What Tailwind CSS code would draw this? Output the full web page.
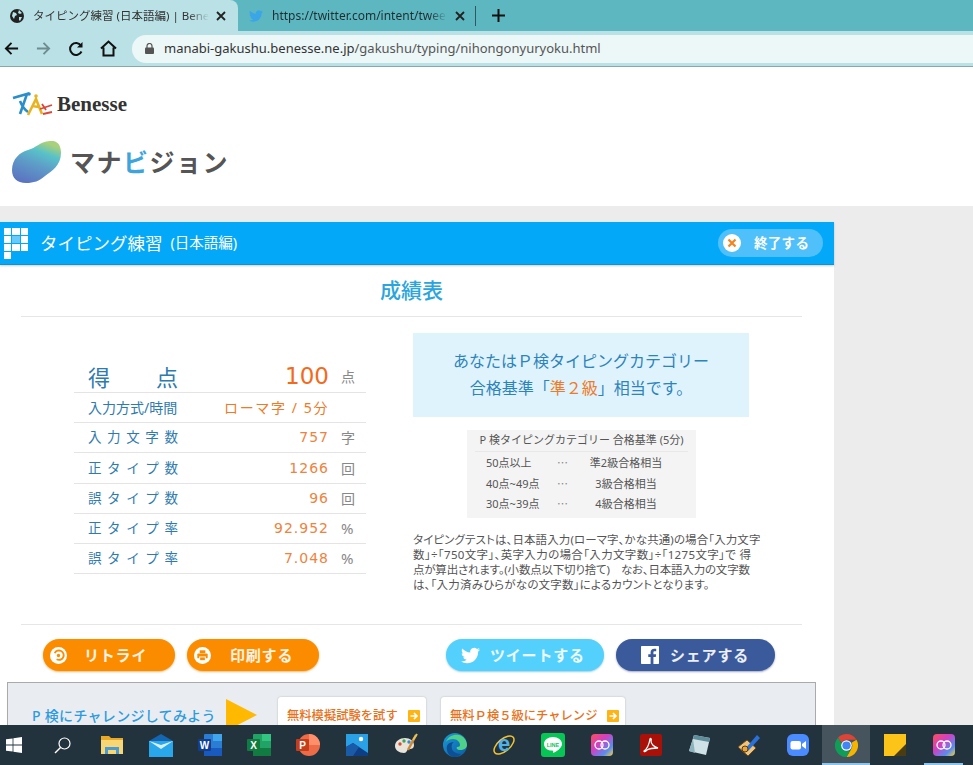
<!DOCTYPE html>
<html lang="ja">
<head>
  <meta charset="UTF-8">
  <title>タイピング練習 (日本語編) | Benesse</title>
  <script src="https://cdn.jsdelivr.net/npm/@tailwindcss/browser@4"></script>
</head>
<body class="h-[765px] w-[973px] overflow-hidden bg-[#ececec] font-['Noto_Sans','Noto_Sans_CJK_JP',sans-serif] text-[#444]">

  <!-- browser chrome -->
  <div class="flex h-[31px] items-end bg-[#5db7c0]">
    <div class="flex h-[31px] w-[238px] items-center rounded-tr-lg bg-[#b9e1e6] pl-[10px] text-[11.5px] text-[#333]">
      <svg class="mr-[9px] h-[14px] w-[14px] shrink-0" viewBox="0 0 14 14"><circle cx="7" cy="7" r="7" fill="#222"/><path d="M3 3l3 1 1 2-2 1-1 3-2-3zM9 1l3 3-2 1-2-1zM9 8l3 0-2 4-1-1z" fill="#b9e1e6"/></svg>
      <span class="w-[176px] overflow-hidden whitespace-nowrap [mask-image:linear-gradient(to_right,black_88%,transparent)]">タイピング練習 (日本語編) | Benesse</span>
      <svg class="ml-[7px] h-[10px] w-[10px]" viewBox="0 0 10 10"><path d="M1 1l8 8M9 1l-8 8" stroke="#222" stroke-width="1.8"/></svg>
    </div>
    <div class="flex h-[31px] items-center text-[12px] text-[#1e2e30]">
      <svg class="ml-[11px] mr-[9px] h-[14px] w-[14px]" viewBox="0 0 24 24"><path fill="#3aa6e8" d="M23.953 4.57a10 10 0 01-2.825.775 4.958 4.958 0 002.163-2.723c-.951.555-2.005.959-3.127 1.184a4.92 4.92 0 00-8.384 4.482C7.69 8.095 4.067 6.13 1.64 3.162a4.822 4.822 0 00-.666 2.475c0 1.71.87 3.213 2.188 4.096a4.904 4.904 0 01-2.228-.616v.06a4.923 4.923 0 003.946 4.827 4.996 4.996 0 01-2.212.085 4.936 4.936 0 004.604 3.417 9.867 9.867 0 01-6.102 2.105c-.39 0-.779-.023-1.17-.067a13.995 13.995 0 007.557 2.209c9.053 0 13.998-7.496 13.998-13.985 0-.21 0-.42-.015-.63A9.935 9.935 0 0024 4.59z"/></svg>
      <span class="w-[175px] overflow-hidden whitespace-nowrap [mask-image:linear-gradient(to_right,black_90%,transparent)]">https://twitter.com/intent/tweet?text=</span>
      <svg class="ml-[8px] h-[10px] w-[10px]" viewBox="0 0 10 10"><path d="M1 1l8 8M9 1l-8 8" stroke="#222" stroke-width="1.8"/></svg>
      <div class="ml-[10px] h-[20px] w-px bg-[#2c5a60]"></div>
      <svg class="ml-[16px] h-[13px] w-[13px]" viewBox="0 0 13 13"><path d="M6.5 0v13M0 6.5h13" stroke="#111" stroke-width="2"/></svg>
    </div>
  </div>
  <div class="flex h-[36px] items-center border-b border-[#86a9ad] bg-[#b9e1e6]">
    <svg class="ml-[4px] h-[15px] w-[15px]" viewBox="0 0 16 16"><path d="M15 8H2M8 2L2 8l6 6" fill="none" stroke="#111" stroke-width="2"/></svg>
    <svg class="ml-[17px] h-[15px] w-[15px]" viewBox="0 0 16 16"><path d="M1 8h13M8 2l6 6-6 6" fill="none" stroke="#6f8c90" stroke-width="2"/></svg>
    <svg class="ml-[17px] h-[16px] w-[16px]" viewBox="0 0 16 16"><path d="M13.5 10.5A6 6 0 1 1 13 4.5" fill="none" stroke="#111" stroke-width="2"/><path d="M14.5 1v5.5H9z" fill="#111"/></svg>
    <svg class="ml-[16px] h-[17px] w-[17px]" viewBox="0 0 17 17"><path d="M1 8.5L8.5 1.5l7.5 7M3.5 7.5v8h10v-8" fill="none" stroke="#111" stroke-width="2"/></svg>
    <div class="ml-[15px] flex h-[28px] flex-1 items-center rounded-l-full bg-[#ecf7f8] pl-[13px] text-[13px] text-[#333]">
      <svg class="mr-[10px] h-[11px] w-[9px]" viewBox="0 0 9 11"><path d="M2 5V3a2.5 2.5 0 0 1 5 0v2" fill="none" stroke="#555" stroke-width="1.2"/><rect y="4.5" width="9" height="6.5" rx="1" fill="#555"/></svg>
      <span>manabi-gakushu.benesse.ne.jp<span class="text-[#555]">/gakushu/typing/nihongonyuryoku.html</span></span>
    </div>
  </div>

  <div class="h-[658px] overflow-hidden">
    <!-- site header -->
    <div class="h-[139px] bg-white pl-[12px] pt-[25px]">
      <div class="flex items-center">
        <svg class="h-[25px] w-[42px]" viewBox="0 0 42 25">
          <path d="M1 6L15 2 8 22M8 9c2 5 5 9 8 11" fill="none" stroke="#2a8fc9" stroke-width="2.6"/>
          <circle cx="17" cy="2" r="1.800" fill="#2a8fc9"/>
          <path d="M16 23l8-16 6 15M20 14l7 1" fill="none" stroke="#e8b321" stroke-width="2.6"/>
          <circle cx="24" cy="4" r="1.800" fill="#e8b321"/>
          <path d="M28 17L40 13M30 12l4 6M31 22l9-2" fill="none" stroke="#d9483b" stroke-width="1.800"/>
        </svg>
        <span class="ml-[3px] font-['Liberation_Serif',serif] text-[21px] leading-none font-bold text-[#333]">Benesse</span>
      </div>
      <div class="mt-[24px] flex items-center">
        <svg class="h-[43px] w-[50px]" viewBox="0 0 50 43">
          <defs><linearGradient id="blob" x1="0.15" y1="1" x2="0.6" y2="0"><stop offset="0" stop-color="#5b6fc0"/><stop offset="0.5" stop-color="#5e9dc8"/><stop offset="0.78" stop-color="#58c2c8"/><stop offset="1" stop-color="#a9d07a"/></linearGradient></defs>
          <path d="M0 29C0 18 8 11 16 9 24 7 27 1 38 0 46-1 49 5 49 12 49 24 40 30 33 35 27 40 22 42 14 42 5 42 0 37 0 29z" fill="url(#blob)"/>
        </svg>
        <span class="ml-[8px] text-[25px] leading-none font-bold tracking-[1.5px] text-[#555]">マナ<span class="text-[#3ea5dc]">ビ</span>ジョン</span>
      </div>
    </div>

    <div class="mt-[16px] w-[834px] bg-white">
      <!-- blue title bar -->
      <div class="flex h-[43px] items-center border-b border-[#0a94d6] bg-[#03a9f8] pl-[4px] text-white shadow-[0_1px_2px_rgba(0,0,0,0.2)]">
        <div class="grid w-[24px] grid-cols-3 gap-px">
          <div class="h-[7px] bg-white"></div><div class="h-[7px] bg-white"></div><div class="h-[7px] bg-white"></div>
          <div class="h-[7px] bg-white"></div><div class="h-[7px] bg-white/40"></div><div class="h-[7px] bg-white"></div>
          <div class="h-[7px] bg-white"></div><div class="h-[7px] bg-white"></div><div class="h-[7px] bg-white"></div>
          <div class="h-[7px] bg-white"></div>
        </div>
        <span class="ml-[12px] text-[17.5px]">タイピング練習</span>
        <span class="ml-[8px] text-[14.5px]">(日本語編)</span>
        <div class="mr-[11px] ml-auto flex h-[28px] w-[105px] items-center rounded-full bg-[#4fc0f9] pl-[5px]">
          <svg class="h-[18px] w-[18px]" viewBox="0 0 18 18"><circle cx="9" cy="9" r="9" fill="#fff"/><path d="M5.5 5.5l7 7M12.5 5.5l-7 7" stroke="#f5841f" stroke-width="2.2"/></svg>
          <span class="ml-[13px] text-[13.5px] font-bold tracking-[0.3px]">終了する</span>
        </div>
      </div>

      <div class="ml-[21px] flex h-[52px] w-[781px] items-center justify-center border-b border-[#e6e6e6] pt-[1px] text-[21px] font-medium text-[#2ba5dc]">成績表</div>

      <div class="flex h-[307px]">
        <!-- score table -->
        <div class="ml-[74px] w-[292px] pt-[44px] text-[#2f7bae]">
          <div class="flex h-[32px] items-center border-b border-[#e4e4e4]">
            <span class="ml-[14px] w-[90px] text-[22px] leading-none [text-align-last:justify]">得点</span>
            <span class="w-[151px] text-right font-['DejaVu_Sans',sans-serif] text-[23px] leading-none text-[#f26a1b]">100</span>
            <span class="ml-[12px] text-[14px] text-[#888]">点</span>
          </div>
          <div class="flex h-[30px] items-center border-b border-[#e4e4e4]">
            <span class="ml-[14px] w-[90px] text-[14px] leading-none whitespace-nowrap">入力方式/時間</span>
            <span class="w-[151px] text-right text-[14px] tracking-[1.6px] whitespace-nowrap text-[#ee7a28]">ローマ字 / 5分</span>
          </div>
          <div class="flex h-[30px] items-center border-b border-[#e4e4e4]">
            <span class="ml-[14px] w-[90px] text-[13.5px] [text-align-last:justify]">入力文字数</span>
            <span class="w-[151px] text-right font-['DejaVu_Sans',sans-serif] text-[14px] tracking-[1px] text-[#ee8340]">757</span>
            <span class="ml-[12px] text-[14px] text-[#888]">字</span>
          </div>
          <div class="flex h-[31px] items-center border-b border-[#e4e4e4]">
            <span class="ml-[14px] w-[90px] text-[13.5px] [text-align-last:justify]">正タイプ数</span>
            <span class="w-[151px] text-right font-['DejaVu_Sans',sans-serif] text-[14px] tracking-[1px] text-[#ee8340]">1266</span>
            <span class="ml-[12px] text-[14px] text-[#888]">回</span>
          </div>
          <div class="flex h-[30px] items-center border-b border-[#e4e4e4]">
            <span class="ml-[14px] w-[90px] text-[13.5px] [text-align-last:justify]">誤タイプ数</span>
            <span class="w-[151px] text-right font-['DejaVu_Sans',sans-serif] text-[14px] tracking-[1px] text-[#ee8340]">96</span>
            <span class="ml-[12px] text-[14px] text-[#888]">回</span>
          </div>
          <div class="flex h-[30px] items-center border-b border-[#e4e4e4]">
            <span class="ml-[14px] w-[90px] text-[13.5px] [text-align-last:justify]">正タイプ率</span>
            <span class="w-[151px] text-right font-['DejaVu_Sans',sans-serif] text-[14px] tracking-[1px] text-[#ee8340]">92.952</span>
            <span class="ml-[12px] text-[15px] text-[#888]">%</span>
          </div>
          <div class="flex h-[30px] items-center border-b border-[#e4e4e4]">
            <span class="ml-[14px] w-[90px] text-[13.5px] [text-align-last:justify]">誤タイプ率</span>
            <span class="w-[151px] text-right font-['DejaVu_Sans',sans-serif] text-[14px] tracking-[1px] text-[#ee8340]">7.048</span>
            <span class="ml-[12px] text-[15px] text-[#888]">%</span>
          </div>
        </div>

        <!-- result side -->
        <div class="ml-[47px] w-[356px] pt-[16px]">
          <div class="flex h-[84px] w-[336px] flex-col items-center justify-center bg-[#dff3fd] text-[16px] leading-[27px] text-[#2d83ba]">
            <p>あなたはＰ検タイピングカテゴリー</p>
            <p>合格基準「<span class="text-[#ee7a28]">準２級</span>」相当です。</p>
          </div>
          <div class="mt-[13px] ml-[54px] h-[88px] w-[229px] bg-[#f4f4f4] text-[11px] text-[#555]">
            <div class="mx-[8px] flex h-[22px] items-center justify-center border-b border-[#e8e8e8] whitespace-nowrap">P 検タイピングカテゴリー 合格基準 (5分)</div>
            <div class="flex h-[22px] items-center pl-[19px]"><span class="w-[71px]">50点以上</span><span class="w-[30px] text-[#888]">⋯</span><span class="w-[78px] text-center">準2級合格相当</span></div>
            <div class="flex h-[20px] items-center pl-[19px]"><span class="w-[71px]">40点~49点</span><span class="w-[30px] text-[#888]">⋯</span><span class="w-[78px] text-center">3級合格相当</span></div>
            <div class="flex h-[20px] items-center pl-[19px]"><span class="w-[71px]">30点~39点</span><span class="w-[30px] text-[#888]">⋯</span><span class="w-[78px] text-center">4級合格相当</span></div>
          </div>
          <div class="mt-[14px] text-[11.5px] leading-[15px] whitespace-nowrap text-[#555] [font-feature-settings:'palt']">
            <p class="tracking-[0.1px]">タイピングテストは、日本語入力(ローマ字、かな共通)の場合「入力文字</p>
            <p class="tracking-[0.35px]">数」÷「750文字」、英字入力の場合「入力文字数」÷「1275文字」で 得</p>
            <p class="tracking-[-0.2px]">点が算出されます。(小数点以下切り捨て)　なお、日本語入力の文字数</p>
            <p class="tracking-[0.2px]">は、「入力済みひらがなの文字数」によるカウントとなります。</p>
          </div>
        </div>
      </div>

      <div class="ml-[21px] w-[781px] border-t border-[#e6e6e6] pt-[14px]">
        <!-- buttons -->
        <div class="flex h-[32px] items-center pl-[22px] text-[15px] font-bold tracking-[0.8px] text-white/90">
          <div class="flex h-[32px] w-[132px] shrink-0 items-center rounded-full bg-[#fb8c00] pl-[7px] shadow-[0_1px_2px_rgba(200,120,0,0.5)]">
            <svg class="h-[17px] w-[17px]" viewBox="0 0 18 18"><circle cx="9" cy="9" r="9" fill="#fff"/><path d="M5 6.5A5 5 0 1 1 7 13" fill="none" stroke="#fb8c00" stroke-width="2"/><circle cx="9" cy="9" r="1.8" fill="#fb8c00"/></svg>
            <span class="ml-[17px]">リトライ</span>
          </div>
          <div class="ml-[12px] flex h-[32px] w-[132px] shrink-0 items-center rounded-full bg-[#fb8c00] pl-[7px] shadow-[0_1px_2px_rgba(200,120,0,0.5)]">
            <svg class="h-[17px] w-[17px]" viewBox="0 0 18 18"><circle cx="9" cy="9" r="9" fill="#fff"/><rect x="6" y="3.5" width="6" height="3" fill="#fb8c00"/><rect x="3.5" y="7" width="11" height="5" rx="1" fill="#fb8c00"/><rect x="6" y="10.5" width="6" height="4" fill="#fb8c00" stroke="#fff"/></svg>
            <span class="ml-[19px]">印刷する</span>
          </div>
          <div class="ml-[127px] flex h-[32px] w-[158px] shrink-0 items-center rounded-full bg-[#54d0fc] pl-[15px] shadow-[0_1px_2px_rgba(0,130,180,0.4)]">
            <svg class="h-[19px] w-[19px]" viewBox="0 0 24 24"><path fill="#fff" d="M23.953 4.57a10 10 0 01-2.825.775 4.958 4.958 0 002.163-2.723c-.951.555-2.005.959-3.127 1.184a4.92 4.92 0 00-8.384 4.482C7.69 8.095 4.067 6.13 1.64 3.162a4.822 4.822 0 00-.666 2.475c0 1.71.87 3.213 2.188 4.096a4.904 4.904 0 01-2.228-.616v.06a4.923 4.923 0 003.946 4.827 4.996 4.996 0 01-2.212.085 4.936 4.936 0 004.604 3.417 9.867 9.867 0 01-6.102 2.105c-.39 0-.779-.023-1.17-.067a13.995 13.995 0 007.557 2.209c9.053 0 13.998-7.496 13.998-13.985 0-.21 0-.42-.015-.63A9.935 9.935 0 0024 4.59z"/></svg>
            <span class="ml-[10px]">ツイートする</span>
          </div>
          <div class="ml-[12px] flex h-[32px] w-[159px] shrink-0 items-center rounded-full bg-[#3a5a9b] pl-[25px] shadow-[0_1px_2px_rgba(20,40,100,0.4)]">
            <svg class="h-[18px] w-[18px]" viewBox="0 0 24 24"><path fill="#fff" d="M22.675 0H1.325C.593 0 0 .593 0 1.325v21.351C0 23.407.593 24 1.325 24H12.82v-9.294H9.692v-3.622h3.128V8.413c0-3.1 1.893-4.788 4.659-4.788 1.325 0 2.463.099 2.795.143v3.24l-1.918.001c-1.504 0-1.795.715-1.795 1.763v2.313h3.587l-.467 3.622h-3.12V24h6.116c.73 0 1.323-.593 1.323-1.325V1.325C24 .593 23.407 0 22.675 0z"/></svg>
            <span class="ml-[11px]">シェアする</span>
          </div>
        </div>
      </div>

      <!-- challenge panel -->
      <div class="mt-[11px] ml-[7px] flex h-[70px] w-[809px] border border-[#aaa] bg-[#e9edf1] pt-[14px] pl-[24px]">
        <span class="mt-[9px] w-[194px] text-[14px] leading-[20px] font-medium tracking-[0.3px] whitespace-nowrap text-[#2d9be0]">P 検にチャレンジしてみよう</span>
        <svg class="mt-[2px] h-[32px] w-[31px]" viewBox="0 0 31 32"><path d="M0 0l31 16L0 32z" fill="#ffb900"/></svg>
        <div class="ml-[21px] flex h-[40px] w-[148px] items-center rounded-[3px] bg-white pb-[2px] pl-[9px] text-[12.3px] font-medium text-[#e8711a] shadow-[0_0_2px_rgba(0,0,0,0.25)]">
          <span class="whitespace-nowrap">無料模擬試験を試す</span>
          <svg class="ml-[10px] h-[12px] w-[12px]" viewBox="0 0 12 12"><rect width="12" height="12" rx="1" fill="#fdb414"/><path d="M2.5 6h6M6 3l3 3-3 3" fill="none" stroke="#fff" stroke-width="1.6"/></svg>
        </div>
        <div class="ml-[15px] flex h-[40px] w-[184px] items-center rounded-[3px] bg-white pb-[2px] pl-[9px] text-[12.3px] font-medium text-[#e8711a] shadow-[0_0_2px_rgba(0,0,0,0.25)]">
          <span class="whitespace-nowrap">無料Ｐ検５級にチャレンジ</span>
          <svg class="ml-[10px] h-[12px] w-[12px]" viewBox="0 0 12 12"><rect width="12" height="12" rx="1" fill="#fdb414"/><path d="M2.5 6h6M6 3l3 3-3 3" fill="none" stroke="#fff" stroke-width="1.6"/></svg>
        </div>
      </div>
    </div>
  </div>

  <!-- windows taskbar -->
  <div class="flex h-[40px] items-center bg-[#22333e]">
    <div class="ml-[-11px] flex h-[40px] w-[49px] items-center justify-center">
      <svg class="h-[16px] w-[16px]" viewBox="0 0 16 16"><path fill="#fff" d="M0 2.3l6.6-.9v6.2H0zM7.4 1.3L16 0v7.6H7.4zM0 8.4h6.6v6.2L0 13.7zM7.4 8.4H16V16l-8.6-1.2z"/></svg>
    </div>
    <div class="flex h-[40px] w-[49px] items-center justify-center">
      <svg class="h-[17px] w-[17px]" viewBox="0 0 17 17"><circle cx="10.5" cy="6.5" r="5.5" fill="none" stroke="#fff" stroke-width="1.2"/><path d="M6.5 10.5L1 16" stroke="#fff" stroke-width="1.4"/></svg>
    </div>
    <div class="flex h-[40px] w-[49px] items-center justify-center">
      <svg class="h-[22px] w-[22px]" viewBox="0 0 22 22"><path d="M0 2h8l2 2h12v3H0z" fill="#e9a825"/><rect y="6" width="22" height="14" fill="#f7d774"/><rect x="4" y="13" width="14" height="7" fill="#4a9ad4"/><rect x="7" y="16" width="8" height="4" fill="#f7d774"/></svg>
    </div>
    <div class="flex h-[40px] w-[49px] items-center justify-center">
      <svg class="h-[23px] w-[24px]" viewBox="0 0 24 23"><path d="M12 0l12 7-12 8L0 7z" fill="#1565b0"/><rect y="7" width="24" height="16" fill="#28a8ea"/><path d="M0 7l12 8 12-8-12 4z" fill="#d8f0fc"/></svg>
    </div>
    <div class="flex h-[40px] w-[49px] items-center justify-center">
      <svg class="h-[22px] w-[24px]" viewBox="0 0 24 22"><rect x="6" width="18" height="22" rx="1" fill="#2b7cd3"/><rect x="15" width="9" height="7" fill="#41a5ee"/><rect x="6" y="14" width="18" height="8" fill="#185abd"/><rect y="5" width="13" height="12" rx="1" fill="#103f91"/><text x="6.5" y="14.5" text-anchor="middle" font-family="Liberation Sans" font-size="10" font-weight="700" fill="#fff">W</text></svg>
    </div>
    <div class="flex h-[40px] w-[49px] items-center justify-center">
      <svg class="h-[22px] w-[24px]" viewBox="0 0 24 22"><rect x="6" width="18" height="22" rx="1" fill="#21a366"/><rect x="15" width="9" height="7" fill="#33c481"/><rect x="6" y="14" width="18" height="8" fill="#107c41"/><rect y="5" width="13" height="12" rx="1" fill="#107c41"/><text x="6.5" y="14.5" text-anchor="middle" font-family="Liberation Sans" font-size="10" font-weight="700" fill="#fff">X</text></svg>
    </div>
    <div class="flex h-[40px] w-[49px] items-center justify-center">
      <svg class="h-[22px] w-[24px]" viewBox="0 0 24 22"><circle cx="13" cy="11" r="11" fill="#ed6c47"/><path d="M13 0a11 11 0 0 1 11 11H13z" fill="#ff8f6b"/><rect y="5" width="13" height="12" rx="1" fill="#c43e1c"/><text x="6.5" y="14.5" text-anchor="middle" font-family="Liberation Sans" font-size="10" font-weight="700" fill="#fff">P</text></svg>
    </div>
    <div class="flex h-[40px] w-[49px] items-center justify-center">
      <svg class="h-[22px] w-[22px]" viewBox="0 0 22 22"><rect width="22" height="22" fill="#2aa1e4"/><path d="M0 22v-9l7-4 15 10v3z" fill="#0e3e84"/><path d="M7 9l6 4-6 9H0v-9z" fill="#1a5ba8"/><circle cx="15" cy="5" r="2.2" fill="#fff"/></svg>
    </div>
    <div class="flex h-[40px] w-[49px] items-center justify-center">
      <svg class="h-[24px] w-[24px]" viewBox="0 0 24 24"><path d="M1 13c0-5 5-8 10-8s9 3 9 7-3 4-5 4-2 4-5 4c-5 0-9-3-9-7z" fill="#e8e4da"/><circle cx="6" cy="11" r="1.7" fill="#d94a38"/><circle cx="10" cy="8" r="1.7" fill="#3aa657"/><circle cx="15" cy="9" r="1.7" fill="#3b86d6"/><path d="M14 17L22 2" stroke="#c98a3a" stroke-width="2.5"/><path d="M19 7l4-6" stroke="#e8c25a" stroke-width="2"/></svg>
    </div>
    <div class="flex h-[40px] w-[49px] items-center justify-center">
      <svg class="h-[24px] w-[24px]" viewBox="0 0 24 24"><defs><linearGradient id="edge" x1="0" y1="0" x2="1" y2="1"><stop offset="0" stop-color="#1a9bd7"/><stop offset="1" stop-color="#0c59a4"/></linearGradient></defs><circle cx="12" cy="12" r="12" fill="url(#edge)"/><path d="M3 9C5 3 11 1 16 2c5 1 8 6 8 10 0 3-3 5-7 5-3 0-4-2-3-3 2 0 3-1 3-2 0-3-3-6-7-6-3 0-6 1-7 3z" fill="#4fd08a"/><path d="M11 24c-6-1-8-7-7-11 1-3 4-4 7-4-3 2-3 6-1 9 2 2 5 3 8 3-2 2-4 3-7 3z" fill="#0c4f92"/></svg>
    </div>
    <div class="flex h-[40px] w-[49px] items-center justify-center">
      <svg class="h-[24px] w-[24px]" viewBox="0 0 24 24"><ellipse cx="12" cy="12" rx="12" ry="6" transform="rotate(-40 12 12)" fill="none" stroke="#f2c230" stroke-width="1.5"/><text x="12" y="18" text-anchor="middle" font-family="Liberation Sans" font-size="22" font-weight="700" fill="#4fb0e8">e</text></svg>
    </div>
    <div class="flex h-[40px] w-[49px] items-center justify-center">
      <svg class="h-[24px] w-[24px]" viewBox="0 0 24 24"><rect width="24" height="24" rx="3" fill="#06c755"/><path d="M12 4c5 0 9 3 9 7 0 4-6 8-9 9 0-1 .5-2-.5-2.500C7 18 3 15 3 11c0-4 4-7 9-7z" fill="#fff"/><text x="12" y="13.500" text-anchor="middle" font-family="Liberation Sans" font-size="5.500" font-weight="700" fill="#06c755">LINE</text></svg>
    </div>
    <div class="flex h-[40px] w-[49px] items-center justify-center">
      <svg class="h-[22px] w-[22px]" viewBox="0 0 22 22"><defs><linearGradient id="cc" x1="0" y1="0" x2="1" y2="1"><stop offset="0" stop-color="#ff4f5a"/><stop offset="0.4" stop-color="#d23fc0"/><stop offset="0.75" stop-color="#5a8cf0"/><stop offset="1" stop-color="#f5d040"/></linearGradient></defs><rect width="22" height="22" rx="4" fill="url(#cc)"/><circle cx="8" cy="11" r="4" fill="none" stroke="#fff" stroke-width="1.3"/><circle cx="14" cy="11" r="4" fill="none" stroke="#fff" stroke-width="1.3"/></svg>
    </div>
    <div class="flex h-[40px] w-[49px] items-center justify-center">
      <svg class="h-[22px] w-[22px]" viewBox="0 0 22 22"><rect width="22" height="22" rx="2" fill="#a81008"/><path d="M4 17c3-2 5-6 6-12 0-1 2-1 1 2 0 3 3 6 7 7-4 0-8 0-11 2-2 2-3 2-3 1z" fill="none" stroke="#fff" stroke-width="1.300"/></svg>
    </div>
    <div class="flex h-[40px] w-[49px] items-center justify-center">
      <svg class="h-[24px] w-[24px]" viewBox="0 0 24 24"><path d="M6 2l16 3-4 17L1 18z" fill="#cfe3e6"/><path d="M6 2l16 3-1 4L5 6z" fill="#5f8d9a"/><path d="M1 18l4-12 2 14z" fill="#8db3bb"/></svg>
    </div>
    <div class="flex h-[40px] w-[49px] items-center justify-center">
      <svg class="h-[24px] w-[24px]" viewBox="0 0 24 24"><path d="M1 14l9-7 9 8-8 8z" fill="#f0c47a" stroke="#6a4a20"/><path d="M8 16L20 2l3 3L11 18z" fill="#2a72d8"/><circle cx="8" cy="16" r="3" fill="#e8a53a" stroke="#5a3a10"/></svg>
    </div>
    <div class="flex h-[40px] w-[49px] items-center justify-center">
      <svg class="h-[22px] w-[22px]" viewBox="0 0 22 22"><rect width="22" height="22" rx="6" fill="#4a8cff"/><rect x="3.500" y="7" width="10.500" height="8.500" rx="2" fill="#fff"/><path d="M15 10l4-3v8l-4-3z" fill="#fff"/></svg>
    </div>
    <div class="relative flex h-[40px] w-[48px] items-center justify-center bg-[#46545d]">
      <svg class="h-[23px] w-[23px]" viewBox="0 0 24 24"><path d="M12 0a12 12 0 0 1 10.400 6H12a6 6 0 0 0-5.200 3L3.100 3.900A12 12 0 0 1 12 0z" fill="#db4437"/><path d="M22.400 6A12 12 0 0 1 12 24l5.200-9A6 6 0 0 0 17.200 9z" fill="#f4b400"/><path d="M3.100 3.900L12 18a6 6 0 0 0 5.200-3L12 24A12 12 0 0 1 3.100 3.900z" fill="#0f9d58"/><circle cx="12" cy="12" r="5.500" fill="#fff"/><circle cx="12" cy="12" r="4.300" fill="#4285f4"/></svg>
      <div class="absolute right-0 bottom-0 left-0 h-[2px] bg-[#8cc4ec]"></div>
    </div>
    <div class="flex h-[40px] w-[49px] items-center justify-center">
      <svg class="h-[22px] w-[22px]" viewBox="0 0 22 22"><rect width="22" height="22" fill="#fcc419"/><path d="M22 10v12H10z" fill="#4a3d14"/></svg>
    </div>
    <div class="relative flex h-[40px] w-[49px] items-center justify-center">
      <svg class="h-[22px] w-[22px]" viewBox="0 0 22 22"><rect width="22" height="22" rx="4" fill="url(#cc)"/><circle cx="8" cy="11" r="4" fill="none" stroke="#fff" stroke-width="1.3"/><circle cx="14" cy="11" r="4" fill="none" stroke="#fff" stroke-width="1.3"/></svg>
      <div class="absolute right-[5px] bottom-0 left-[5px] h-[2px] bg-[#8cc4ec]"></div>
    </div>
  </div>
</body>
</html>
